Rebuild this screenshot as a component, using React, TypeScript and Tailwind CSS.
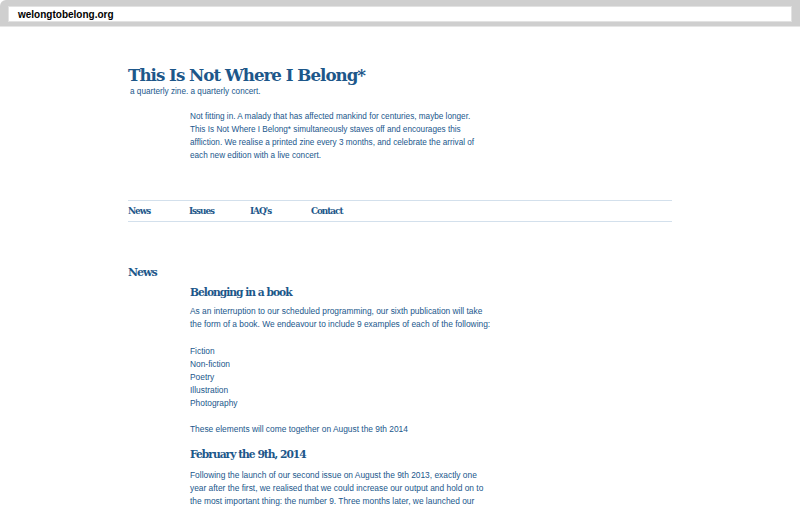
import React from "react";

const slab = { fontFamily: '"DejaVu Serif", serif' };
const sans = { fontFamily: '"Liberation Sans", Arial, sans-serif' };

const navItems = ["News", "Issues", "IAQ's", "Contact"];

const App: React.FC = () => {
  return (
    <div className="w-[800px] h-[507px] overflow-hidden bg-white">
      {/* browser bar */}
      <div className="h-[27px] bg-[#cfcfcf] rounded-tl-[6px] px-[8px] pt-[6px] border-b border-[#e6e6e6]">
        <div className="h-[16px] bg-white border border-[#e2e2e2] pl-[9px] flex items-center">
          <span className="text-[10px] font-bold text-black" style={sans}>
            welongtobelong.org
          </span>
        </div>
      </div>

      <div className="w-[544px] mx-auto text-[#21578c]">
        {/* header */}
        <header className="pt-[36px]">
          <h1 className="text-[16.7px] font-bold leading-[24px] tracking-[-1px] text-[#1d578a]" style={slab}>
            This Is Not Where I Belong*
          </h1>
          <p className="text-[8.2px] leading-[10px] ml-[2px]" style={sans}>
            a quarterly zine. a quarterly concert.
          </p>
          <p className="ml-[62px] mt-[13px] whitespace-nowrap text-[8.2px] leading-[13px]" style={sans}>
            Not fitting in. A malady that has affected mankind for centuries, maybe longer.
            <br />
            This Is Not Where I Belong* simultaneously staves off and encourages this
            <br />
            affliction. We realise a printed zine every 3 months, and celebrate the arrival of
            <br />
            each new edition with a live concert.
          </p>
        </header>

        {/* nav */}
        <nav className="mt-[38px] border-y border-[#d3e0ec] h-[22px] flex items-center pt-[1px]">
          {navItems.map((item) => (
            <a
              key={item}
              className="w-[61px] text-[8.8px] font-bold tracking-[-1px] text-[#1d578a]"
              style={slab}
            >
              {item}
            </a>
          ))}
        </nav>

        {/* news */}
        <section className="mt-[43px]">
          <h2 className="text-[11px] font-bold leading-[16px] tracking-[-1px] text-[#1d578a]" style={slab}>
            News
          </h2>
          <div className="ml-[62px] whitespace-nowrap">
            <h3
              className="text-[10.7px] font-bold leading-[16px] tracking-[-1px] mt-[4px] text-[#1d578a]"
              style={slab}
            >
              Belonging in a book
            </h3>
            <div className="text-[8.4px] leading-[13px] mt-[4px]" style={sans}>
              <p>
                As an interruption to our scheduled programming, our sixth publication will take
                <br />
                the form of a book. We endeavour to include 9 examples of each of the following:
              </p>
              <ul className="mt-[14px]">
                <li>Fiction</li>
                <li>Non-fiction</li>
                <li>Poetry</li>
                <li>Illustration</li>
                <li>Photography</li>
              </ul>
              <p className="mt-[13px]">These elements will come together on August the 9th 2014</p>
            </div>

            <h3
              className="text-[10.7px] font-bold leading-[16px] tracking-[-1px] mt-[11px] text-[#1d578a]"
              style={slab}
            >
              February the 9th, 2014
            </h3>
            <p className="text-[8.4px] leading-[13px] mt-[6px]" style={sans}>
              Following the launch of our second issue on August the 9th 2013, exactly one
              <br />
              year after the first, we realised that we could increase our output and hold on to
              <br />
              the most important thing: the number 9. Three months later, we launched our
            </p>
          </div>
        </section>
      </div>
    </div>
  );
};

export default App;
